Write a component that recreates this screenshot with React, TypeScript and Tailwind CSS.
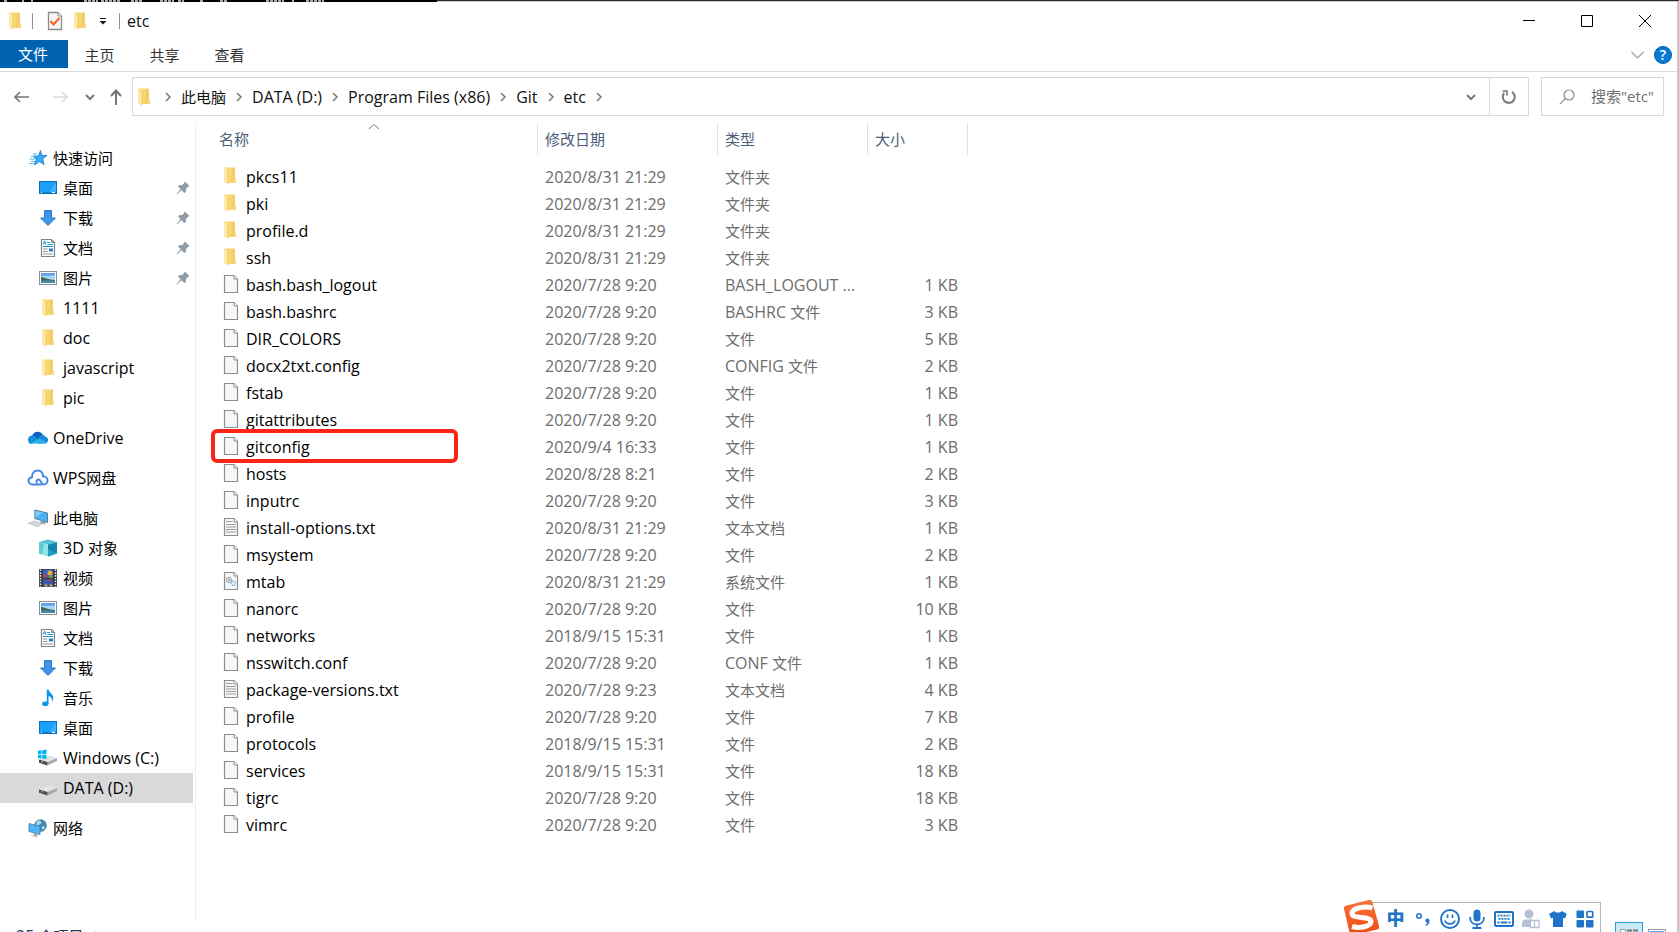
import type { ReactNode } from 'react';

/* Han runs are set one pixel smaller than Latin runs so both scripts look the same size. */
function Label({ children }: { children: string }) {
  const runs = children.split(/([\u4e00-\u9fff]+)/).filter(Boolean);
  return (
    <span className="text-base whitespace-pre">
      {runs.map((r, i) => (/[\u4e00-\u9fff]/.test(r) ? <span key={i} className="text-[15px]">{r}</span> : r))}
    </span>
  );
}

/* ---------- icons ---------- */

function FolderIcon() {
  return (
    <svg width="14" height="18" viewBox="0 0 14 18" aria-hidden="true">
      <path d="M1 0.5H12V11L13 12V16H4L1 15Z" fill="#f8d775" />
      <path d="M9 1H12V11.5H10.5V15H8Z" fill="#f3cb68" />
      <path d="M1 0.5L4.8 3V17.5L1 15.5Z" fill="#ffe9a6" />
      <path d="M4.8 3V17.5" stroke="#eebf55" strokeWidth="0.6" />
    </svg>
  );
}

function FileIcon({ kind = 'blank' }: { kind?: string }) {
  return (
    <svg width="16" height="20" viewBox="0 0 16 20" aria-hidden="true">
      <path d="M1.5 1.5H11L14.5 5V18.5H1.5Z" fill="#f5f7f9" stroke="#8b8d8f" strokeWidth="1.2" />
      <path d="M11 1.5V5H14.5" fill="#fff" stroke="#8b8d8f" strokeWidth="1" />
      {kind === 'text' && (
        <path d="M3 4.5H9.5M3 7.5H13M3 10H13M3 12.5H13M3 15H13" stroke="#9a9c9e" strokeWidth="1" />
      )}
      {kind === 'system' && (
        <g fill="none">
          <circle cx="6" cy="9" r="2.6" stroke="#8a8f94" strokeWidth="1.4" strokeDasharray="1.2 0.6" />
          <circle cx="6" cy="9" r="1" stroke="#8a8f94" strokeWidth="0.8" />
          <circle cx="10.5" cy="12.3" r="2" stroke="#7fb3d9" strokeWidth="1.4" strokeDasharray="1.1 0.5" />
        </g>
      )}
    </svg>
  );
}

function StarIcon() {
  return (
    <svg width="20" height="18" viewBox="0 0 20 18" aria-hidden="true">
      <path d="M12.5 1.5L13.8 6.5H19L14.8 9.8L16 15.8L11.5 12.6L6.2 16L8.2 10.4L5 7H10.4Z" fill="#33aef5" stroke="#1878c0" strokeWidth="0.8" />
      <path d="M5 5H9M3 7.5H7M1.5 10H7M3 12.5H7M1.5 14.5H5.5" stroke="#5cb8f0" strokeWidth="1" />
    </svg>
  );
}

function DesktopIcon() {
  return (
    <svg width="20" height="18" viewBox="0 0 20 18" aria-hidden="true">
      <rect x="1.5" y="2.5" width="17" height="12" fill="#1ba1f8" stroke="#0a6fbd" />
      <path d="M18 3L11 14H18Z" fill="#3fb2ff" />
      <path d="M2 13.7H18" stroke="#0a6fbd" strokeWidth="0.8" />
      <path d="M3 13.5H4M14 13.5H17" stroke="#fff" />
    </svg>
  );
}

function DownloadIcon() {
  return (
    <svg width="20" height="18" viewBox="0 0 20 18" aria-hidden="true">
      <path d="M6.5 1.5H13.5V9H17.5L10 16.5L2.5 9H6.5Z" fill="#3f96e6" stroke="#2a7ccb" />
    </svg>
  );
}

function DocumentIcon() {
  return (
    <svg width="20" height="20" viewBox="0 0 20 20" aria-hidden="true">
      <path d="M3.5 1.5H13.5L16.5 4.5V18.5H3.5Z" fill="#fff" stroke="#808488" strokeWidth="1.2" />
      <path d="M13.5 1.5V4.5H16.5" fill="none" stroke="#808488" />
      <path d="M5 6.5L6.7 3.5L8 6.5M9 4.5H12M9.5 6.5H15M5 8.5H15" stroke="#2191d8" strokeWidth="1.1" fill="none" />
      <path d="M5 11H9.5M5 13.5H9.5M5 16H15" stroke="#8b9095" />
      <rect x="11" y="10.5" width="4" height="3" fill="#2f7fc4" />
    </svg>
  );
}

function PictureIcon() {
  return (
    <svg width="20" height="18" viewBox="0 0 20 18" aria-hidden="true">
      <rect x="1.5" y="2.5" width="17" height="13" fill="#fff" stroke="#8c9094" />
      <rect x="3" y="4" width="14" height="10" fill="#a9d5f8" />
      <path d="M3 4H17V6.5L3 7Z" fill="#5fa3ea" />
      <path d="M3 8C6 8 8 10.5 17 11V12H3Z" fill="#3d6b58" />
      <path d="M3 11.5H17V14H3Z" fill="#4d86a8" />
    </svg>
  );
}

function OneDriveIcon() {
  return (
    <svg width="22" height="18" viewBox="0 0 22 18" aria-hidden="true">
      <path d="M5 7C6 2.5 13 0.8 16 6L10 11Z" fill="#0c62ba" />
      <path d="M1 11C0.8 8 3.5 6 6.5 6.7L14 12L4 15C2 14.5 1 13 1 11Z" fill="#1490df" />
      <path d="M12 8C14 5.5 17 5.5 18 7.5C22 8 22 13.5 18.5 14.5H10Z" fill="#1a8ad8" />
      <path d="M3.5 14.3L13 9.5L20 13.8C19.5 14.3 19 14.5 18 14.5H5C4.4 14.5 4 14.5 3.5 14.3Z" fill="#2bb0ee" />
    </svg>
  );
}

function WpsCloudIcon() {
  return (
    <svg width="22" height="18" viewBox="0 0 22 18" aria-hidden="true" fill="none" stroke="#4285ea" strokeWidth="1.9" strokeLinecap="round">
      <path d="M14 15.5H5.5C3 15.5 1.5 13.8 1.5 11.8C1.5 9.6 3.2 8.4 5 8.2C4.6 4 7.5 1.5 10.7 1.5C14 1.5 16 4 16 7.2C19 7.2 20.5 9.4 20.5 11.4C20.5 13.8 18.8 15.5 16.7 15.5C13.8 15.5 14.5 10.5 11.5 10.5C9.5 10.5 9 12.5 9.8 13.3" />
    </svg>
  );
}

function ComputerIcon() {
  return (
    <svg width="22" height="18" viewBox="0 0 22 18" aria-hidden="true">
      <path d="M7.8 1L20.5 4V13.5L7.8 9.5Z" fill="#4db2f3" stroke="#55748c" strokeWidth="0.9" />
      <path d="M8.3 1.7L15.5 3.4L8.3 8.8Z" fill="#7fcbfa" />
      <path d="M14 12L13 13.8L18 15.5L18.5 13.5Z" fill="#8d99a3" />
      <path d="M1 14.2L8 12L15 15L11 17.6Z" fill="#d5dbe0" stroke="#a6afb6" strokeWidth="0.6" />
    </svg>
  );
}

function CubeIcon() {
  return (
    <svg width="20" height="18" viewBox="0 0 20 18" aria-hidden="true">
      <path d="M1 3L10 0.5L19 3L10 5.5Z" fill="#4fc3d6" />
      <path d="M1 3L10 5.5V17.5L1 14.5Z" fill="#8fe3e6" />
      <path d="M19 3L10 5.5V17.5L19 14.5Z" fill="#1487ad" />
      <path d="M1 3L6 4.4L4 15.5L1 14.5Z" fill="#5ccbd6" />
      <path d="M10 10L19 14.5L10 17.5Z" fill="#1ea2c6" />
    </svg>
  );
}

function VideoIcon() {
  return (
    <svg width="20" height="20" viewBox="0 0 20 20" aria-hidden="true">
      <rect x="1" y="1" width="18" height="18" fill="#33363a" />
      <path d="M2.5 1.5V19M17.5 1.5V19" stroke="#e4e6e8" strokeWidth="1.6" strokeDasharray="1.6 1.2" />
      <rect x="5" y="1.5" width="10" height="8.5" fill="#3760c4" />
      <rect x="5" y="11" width="10" height="7.5" fill="#2f58bc" />
      <circle cx="12" cy="5" r="2.5" fill="#e3b23a" />
      <path d="M5 7L9 6L8 9.8H5Z" fill="#c8402c" />
      <path d="M12 7L15 8V9.8H10Z" fill="#7a9c39" />
      <path d="M6 18.5L8 15.5L10 18.5ZM11 18.5L13 15.5L15 18.5Z" fill="#e0a634" />
      <rect x="9" y="11.5" width="4" height="2" fill="#c03d2d" />
    </svg>
  );
}

function MusicIcon() {
  return (
    <svg width="20" height="18" viewBox="0 0 20 18" aria-hidden="true">
      <ellipse cx="7.3" cy="14.8" rx="3.2" ry="2.4" fill="#0d93ec" />
      <path d="M8.8 0.5H10.6C11 4 15.5 4.8 15.3 9C15.2 10.5 14.5 12 13.8 12.6C14.5 9.5 13 7.6 10.5 7V15H8.8Z" fill="#0d93ec" />
    </svg>
  );
}

function DriveIcon({ windows = false }: { windows?: boolean }) {
  return (
    <svg width="22" height="18" viewBox="0 0 22 18" aria-hidden="true">
      <path d="M2 10.5L12 6.5L20 9L10.5 13Z" fill="#e3e4e5" />
      <path d="M20 9V12L10.5 16.5V13Z" fill="#a7a9ab" />
      <path d="M2 10.5L10.5 13V16.5L2 13.8Z" fill="#4a4d50" />
      <rect x="4" y="12.2" width="2" height="1.2" fill="#5cc46a" />
      {windows && (
        <path d="M1 1.8L4.5 1.3V5H1ZM5.2 1.2L9.5 0.5V5H5.2ZM1 5.8H4.5V9.4L1 8.9ZM5.2 5.8H9.5V10L5.2 9.5Z" fill="#00b3f0" />
      )}
    </svg>
  );
}

function NetworkIcon() {
  return (
    <svg width="22" height="20" viewBox="0 0 22 20" aria-hidden="true">
      <circle cx="13.5" cy="7.5" r="6.3" fill="#4c88ad" />
      <path d="M10 3C13 1.5 15 3.5 14 5.5C12 6.5 11 8.5 9 7.5ZM15 8.5C18 7.5 19 9.5 17 11.5C15 11.5 14 10.5 15 8.5Z" fill="#a8d6ea" />
      <path d="M2 5.5L13 8.5V16.5L2 13.5Z" fill="#50b5f5" stroke="#3c7ba8" strokeWidth="0.8" />
      <path d="M7 15L6.5 17.5L10 18.5L10.5 16Z" fill="#9aa9b5" />
      <path d="M4 17.2L11 19.2" stroke="#c2cad0" strokeWidth="1" />
    </svg>
  );
}

function PinIcon() {
  return (
    <svg width="14" height="14" viewBox="0 0 14 14" aria-hidden="true">
      <path d="M8.8 0.5L13.5 5L11.8 6L10.2 7.8L9.8 11L8.3 12L5.5 9.2L1 13.5L0.5 13L4.6 8.3L2 5.6L3 4.3L6.3 4L8 2.2Z" fill="#8f9ba6" />
    </svg>
  );
}

function Chevron({ dir, className = '' }: { dir: 'right' | 'down' | 'up'; className?: string }) {
  const d = { right: 'M4 2L8 6L4 10', down: 'M2 4L6 8L10 4', up: 'M1 8L6 3.5L11 8' }[dir];
  return (
    <svg width="12" height="12" viewBox="0 0 12 12" fill="none" stroke="currentColor" className={className} aria-hidden="true">
      <path d={d} />
    </svg>
  );
}

/* ---------- data ---------- */

type NavItem = { label: string; icon: ReactNode; level: 0 | 1; pinned?: boolean; selected?: boolean };

const groups: NavItem[][] = [
  [
    { label: '快速访问', icon: <StarIcon />, level: 0 },
    { label: '桌面', icon: <DesktopIcon />, level: 1, pinned: true },
    { label: '下载', icon: <DownloadIcon />, level: 1, pinned: true },
    { label: '文档', icon: <DocumentIcon />, level: 1, pinned: true },
    { label: '图片', icon: <PictureIcon />, level: 1, pinned: true },
    { label: '1111', icon: <FolderIcon />, level: 1 },
    { label: 'doc', icon: <FolderIcon />, level: 1 },
    { label: 'javascript', icon: <FolderIcon />, level: 1 },
    { label: 'pic', icon: <FolderIcon />, level: 1 },
  ],
  [{ label: 'OneDrive', icon: <OneDriveIcon />, level: 0 }],
  [{ label: 'WPS网盘', icon: <WpsCloudIcon />, level: 0 }],
  [
    { label: '此电脑', icon: <ComputerIcon />, level: 0 },
    { label: '3D 对象', icon: <CubeIcon />, level: 1 },
    { label: '视频', icon: <VideoIcon />, level: 1 },
    { label: '图片', icon: <PictureIcon />, level: 1 },
    { label: '文档', icon: <DocumentIcon />, level: 1 },
    { label: '下载', icon: <DownloadIcon />, level: 1 },
    { label: '音乐', icon: <MusicIcon />, level: 1 },
    { label: '桌面', icon: <DesktopIcon />, level: 1 },
    { label: 'Windows (C:)', icon: <DriveIcon windows />, level: 1 },
    { label: 'DATA (D:)', icon: <DriveIcon />, level: 1, selected: true },
  ],
  [{ label: '网络', icon: <NetworkIcon />, level: 0 }],
];

type Row = [name: string, date: string, type: string, size: string, kind?: string];

const rows: Row[] = [
  ['pkcs11', '2020/8/31 21:29', '文件夹', '', 'folder'],
  ['pki', '2020/8/31 21:29', '文件夹', '', 'folder'],
  ['profile.d', '2020/8/31 21:29', '文件夹', '', 'folder'],
  ['ssh', '2020/8/31 21:29', '文件夹', '', 'folder'],
  ['bash.bash_logout', '2020/7/28 9:20', 'BASH_LOGOUT ...', '1 KB'],
  ['bash.bashrc', '2020/7/28 9:20', 'BASHRC 文件', '3 KB'],
  ['DIR_COLORS', '2020/7/28 9:20', '文件', '5 KB'],
  ['docx2txt.config', '2020/7/28 9:20', 'CONFIG 文件', '2 KB'],
  ['fstab', '2020/7/28 9:20', '文件', '1 KB'],
  ['gitattributes', '2020/7/28 9:20', '文件', '1 KB'],
  ['gitconfig', '2020/9/4 16:33', '文件', '1 KB'],
  ['hosts', '2020/8/28 8:21', '文件', '2 KB'],
  ['inputrc', '2020/7/28 9:20', '文件', '3 KB'],
  ['install-options.txt', '2020/8/31 21:29', '文本文档', '1 KB', 'text'],
  ['msystem', '2020/7/28 9:20', '文件', '2 KB'],
  ['mtab', '2020/8/31 21:29', '系统文件', '1 KB', 'system'],
  ['nanorc', '2020/7/28 9:20', '文件', '10 KB'],
  ['networks', '2018/9/15 15:31', '文件', '1 KB'],
  ['nsswitch.conf', '2020/7/28 9:20', 'CONF 文件', '1 KB'],
  ['package-versions.txt', '2020/7/28 9:23', '文本文档', '4 KB', 'text'],
  ['profile', '2020/7/28 9:20', '文件', '7 KB'],
  ['protocols', '2018/9/15 15:31', '文件', '2 KB'],
  ['services', '2018/9/15 15:31', '文件', '18 KB'],
  ['tigrc', '2020/7/28 9:20', '文件', '18 KB'],
  ['vimrc', '2020/7/28 9:20', '文件', '3 KB'],
];

/* ---------- sections ---------- */

function TitleBar() {
  return (
    <header className="flex h-[38px] shrink-0 items-center">
      <div className="flex flex-1 items-center pl-2">
        <FolderIcon />
        <span className="ml-2.5 h-4 w-px bg-[#8f8f8f]" />
        <button aria-label="属性" className="ml-3.5">
          <svg width="16" height="20" viewBox="0 0 16 20" aria-hidden="true">
            <path d="M1.5 1.5H11L14.5 5V18.5H1.5Z" fill="#f6f6f6" stroke="#8a8a8a" strokeWidth="1.3" />
            <path d="M11 1.5V5H14.5" fill="#fff" stroke="#8a8a8a" />
            <path d="M3.5 10L6.5 13.5L12.5 7" fill="none" stroke="#f0641e" strokeWidth="2" />
          </svg>
        </button>
        <button aria-label="新建文件夹" className="ml-2.5">
          <FolderIcon />
        </button>
        <button aria-label="自定义快速访问工具栏" className="ml-3">
          <svg width="8" height="8" viewBox="0 0 8 8" aria-hidden="true">
            <path d="M1 1.5H7" stroke="#111" />
            <path d="M0.5 4H7.5L4 7.5Z" fill="#111" />
          </svg>
        </button>
        <span className="ml-3 h-4 w-px bg-[#8f8f8f]" />
        <h1 className="ml-[7px] text-base text-[#111]">etc</h1>
      </div>
      <div className="flex h-full pr-[3px] text-black">
        <button aria-label="最小化" className="flex w-[58px] items-center justify-center">
          <svg width="12" height="12" viewBox="0 0 12 12" stroke="currentColor"><path d="M0 5.5H12" /></svg>
        </button>
        <button aria-label="最大化" className="flex w-[58px] items-center justify-center">
          <svg width="12" height="12" viewBox="0 0 12 12" fill="none" stroke="currentColor"><path d="M0.5 0.5H11.5V11.5H0.5Z" /></svg>
        </button>
        <button aria-label="关闭" className="flex w-[58px] items-center justify-center">
          <svg width="12" height="12" viewBox="0 0 12 12" stroke="currentColor"><path d="M0 0L12 12M12 0L0 12" /></svg>
        </button>
      </div>
    </header>
  );
}

function RibbonTabs() {
  return (
    <div className="flex h-8 shrink-0 items-start border-b border-[#dadbdc] text-[15px] text-[#333]">
      <button className="h-7 w-[68px] bg-[#0063b1] pr-0.5 text-white">文件</button>
      {['主页', '共享', '查看'].map((t) => (
        <button key={t} className="h-[30px] w-[65px] pr-0.5">{t}</button>
      ))}
      <div className="ml-auto flex h-[30px] items-center gap-2.5 pr-[5px]">
        <button aria-label="展开功能区" className="text-[#a0a0a0]">
          <svg width="13" height="8" viewBox="0 0 13 8" fill="none" stroke="currentColor" strokeWidth="1.2"><path d="M0.5 1L6.5 7L12.5 1" /></svg>
        </button>
        <button aria-label="帮助" className="flex size-[18px] items-center justify-center rounded-full border border-[#0a5ca8] bg-[#0a78d7] text-sm font-semibold text-white">
          ?
        </button>
      </div>
    </div>
  );
}

function AddressBar() {
  return (
    <div className="flex h-[51px] shrink-0 items-center pt-[5px] pr-[13px] pb-[7px] text-[#787878]">
      <button aria-label="后退" className="ml-3.5">
        <svg width="16" height="12" viewBox="0 0 16 12" fill="none" stroke="#777" strokeWidth="1.7"><path d="M15 6H1M6 1L1 6L6 11" /></svg>
      </button>
      <button aria-label="前进" className="ml-[22px]" disabled>
        <svg width="16" height="12" viewBox="0 0 16 12" fill="none" stroke="#dcdcdc" strokeWidth="1.7"><path d="M1 6H15M10 1L15 6L10 11" /></svg>
      </button>
      <button aria-label="最近浏览的位置" className="ml-4"><Chevron dir="down" className="stroke-2" /></button>
      <button aria-label="上移" className="ml-3.5">
        <svg width="12" height="16" viewBox="0 0 12 16" fill="none" stroke="#707070" strokeWidth="1.9"><path d="M6 16V1.5M1 7L6 1.5L11 7" /></svg>
      </button>
      <div className="ml-2.5 flex h-[39px] flex-1 border border-[#d9d9d9]">
        <nav aria-label="路径" className="flex flex-1 items-center pl-1 text-[#111]">
          <span className="mr-1"><FolderIcon /></span>
          {['此电脑', 'DATA (D:)', 'Program Files (x86)', 'Git', 'etc'].map((p) => (
            <span key={p} className="flex items-center">
              <Chevron dir="right" className="mx-[7px] stroke-[1.5] text-[#777]" />
              <a href="#"><Label>{p}</Label></a>
            </span>
          ))}
          <Chevron dir="right" className="mx-[7px] stroke-[1.5] text-[#777]" />
        </nav>
        <button aria-label="以前的位置" className="flex w-9 items-center justify-center"><Chevron dir="down" className="stroke-2" /></button>
        <button aria-label="刷新" className="flex w-[39px] items-center justify-center border-l border-[#d9d9d9]">
          <svg width="16" height="16" viewBox="0 0 16 16" fill="none" stroke="#777" strokeWidth="2">
            <path d="M3.2 4A6 6 0 1 0 11 2.8" />
            <path d="M1.5 2H6V6.5" strokeWidth="1.6" />
          </svg>
        </button>
      </div>
      <label className="ml-3 flex h-[39px] w-[123px] items-center border border-[#d9d9d9] pl-[17px]">
        <svg width="16" height="16" viewBox="0 0 16 16" fill="none" stroke="#888" strokeWidth="1.2" className="shrink-0">
          <circle cx="10" cy="6" r="5" /><path d="M6.3 9.7L0.8 15.2" />
        </svg>
        <input type="text" aria-label="搜索" placeholder={'搜索"etc"'} className="ml-4 w-full min-w-0 bg-transparent text-[15px] outline-none placeholder:text-[#707070]" />
      </label>
    </div>
  );
}

function Sidebar() {
  return (
    <aside className="flex w-[196px] shrink-0 flex-col gap-2.5 border-r border-[#f0f0f0] pt-5 pr-0.5 text-black">
      {groups.map((g, i) => (
        <ul key={i}>
          {g.map((n) => (
            <li key={n.label}>
              <a
                href="#"
                className={
                  'flex h-[30px] items-center pr-[3px] ' +
                  (n.level === 0 ? 'pl-[27px] ' : 'pl-[37px] ') +
                  (n.selected ? 'bg-[#d9d9d9]' : '')
                }
              >
                <span className="flex w-[22px] shrink-0 items-center justify-center">{n.icon}</span>
                <span className="ml-1 flex-1"><Label>{n.label}</Label></span>
                {n.pinned && <PinIcon />}
              </a>
            </li>
          ))}
        </ul>
      ))}
    </aside>
  );
}

function FileTable() {
  return (
    <main className="min-w-0 flex-1">
      <table className="w-[772px] table-fixed border-collapse text-left text-[#6d6d6d]">
        <colgroup>
          <col className="w-[342px]" />
          <col className="w-[180px]" />
          <col className="w-[150px]" />
          <col className="w-[100px]" />
        </colgroup>
        <thead>
          <tr className="text-[15px] text-[#4c607a]">
            {['名称', '修改日期', '类型', '大小'].map((h, i) => (
              <th key={h} className="relative p-0 pb-2 font-normal">
                <div className={'flex h-8 items-center border-r border-[#e3e3e3] ' + (i === 0 ? 'pl-[23px]' : 'pl-[7px]')}>{h}</div>
                {i === 0 && <Chevron dir="up" className="absolute top-[-2px] right-[158px] text-[#777]" />}
              </th>
            ))}
          </tr>
        </thead>
        <tbody>
          {rows.map(([name, date, type, size, kind]) => (
            <tr key={name} className="h-[27px]">
              <td className="relative p-0 pl-[27px]">
                <div className="flex h-[27px] items-center gap-[7px] text-black">
                  <span className="flex w-4 pb-0.5">{kind === 'folder' ? <FolderIcon /> : <FileIcon kind={kind} />}</span>
                  <Label>{name}</Label>
                </div>
                {name === 'gitconfig' && (
                  <span className="pointer-events-none absolute -top-1 left-[15px] h-[34px] w-[247px] rounded-md border-4 border-[#fb2516]" />
                )}
              </td>
              <td className="p-0 pl-[7px] leading-6">{date}</td>
              <td className="p-0 pl-[7px] leading-6"><Label>{type}</Label></td>
              <td className="p-0 pr-[10px] text-right leading-6">{size}</td>
            </tr>
          ))}
        </tbody>
      </table>
    </main>
  );
}

function StatusBar() {
  return (
    <footer className="flex h-[30px] shrink-0 items-start pr-2 text-[#1e395b]">
      <span className="pt-0.5 pl-4"><Label>25 个项目</Label></span>
      <span className="mt-2 ml-3 h-5 w-px bg-[#e3e3e3]" />
      <div className="ml-auto flex items-start">
        <button aria-label="详细信息" className="flex h-7 w-7 justify-center border border-[#26a0da] bg-[#cbe8f6] pt-1.5">
          <svg width="18" height="14" viewBox="0 0 18 14" fill="none"><path d="M0.5 14V0.5H5.5V14" fill="#fff" stroke="#999" /><path d="M7 1.5H12M13 1.5H18" stroke="#777" strokeWidth="2" /></svg>
        </button>
        <button aria-label="大图标" className="ml-[5px] pt-[7px] pr-[3px]">
          <svg width="18" height="14" viewBox="0 0 18 14"><rect x="0.5" y="0.5" width="17" height="13" fill="#fff" stroke="#999" /><rect x="2" y="2" width="14" height="10" fill="#5a9af0" /></svg>
        </button>
      </div>
    </footer>
  );
}

function ImeBar() {
  const cell = 'flex w-[27px] items-center justify-center';
  return (
    <div className="absolute right-[78px] bottom-0 flex h-[30px] w-[242px] border-t border-r border-[#b4b8c4] bg-white pt-0.5 pl-[23px] text-[#1f74c8]">
      <svg width="38" height="36" viewBox="0 0 38 36" className="absolute -top-1 -left-4" aria-hidden="true">
        <defs>
          <linearGradient id="sg" x1="0" y1="0" x2="0" y2="1"><stop offset="0" stopColor="#f8733c" /><stop offset="1" stopColor="#ef4a10" /></linearGradient>
        </defs>
        <path d="M3.5 6.5L26 1C28 0.6 29 1.2 29.4 3L36 27C36.3 29 35.8 30 34 30.6L10 36C8 36.4 7.2 35.6 6.7 34L1 10C0.6 8 1.5 7 3.5 6.5Z" fill="url(#sg)" />
        <path d="M29.5 9C22 6.5 9 9 9 14.5C9 20.5 28 16.5 28 22.5C28 28 16 29.5 9 27.5" fill="none" stroke="#fff" strokeWidth="5" />
      </svg>
      <button className={cell + ' pb-0.5 text-lg font-black'}>中</button>
      <button aria-label="标点" className={cell}>
        <svg width="16" height="16" viewBox="0 0 16 16"><circle cx="4" cy="5" r="2.2" fill="none" stroke="currentColor" strokeWidth="1.6" /><path d="M10.3 9.5A2.1 2.1 0 0 1 14.5 9.5C14.8 12 13 14.5 10.8 15L10.3 14C11.5 13.3 12.2 12.5 12.2 11.5C11 11.3 10.3 10.5 10.3 9.5Z" fill="currentColor" /></svg>
      </button>
      <button aria-label="表情" className={cell}>
        <svg width="20" height="20" viewBox="0 0 20 20" fill="none" stroke="currentColor" strokeWidth="2"><circle cx="10" cy="10" r="9" /><path d="M7.5 5.5V9M12.5 5.5V9M5 11.5C6.5 16 13.5 16 15 11.5" strokeWidth="1.7" /></svg>
      </button>
      <button aria-label="语音" className={cell}>
        <svg width="16" height="20" viewBox="0 0 16 20" fill="none" stroke="currentColor"><rect x="4.5" y="0.5" width="7" height="12" rx="3.5" fill="currentColor" stroke="none" /><path d="M1.2 8V9.5C1.2 17.3 14.8 17.3 14.8 9.5V8M8 15V18M3.5 19H12.5" strokeWidth="1.8" /></svg>
      </button>
      <button aria-label="软键盘" className={cell}>
        <svg width="20" height="16" viewBox="0 0 20 16" fill="none" stroke="currentColor"><rect x="1" y="1" width="18" height="14" rx="1" strokeWidth="2" /><path d="M3.5 4.7H16.5M4.5 7.8H16.5" strokeWidth="1.8" strokeDasharray="2 1" /><path d="M3.5 11.5H5.5M6.8 11.5H13.2M14.5 11.5H16.5" strokeWidth="2" /></svg>
      </button>
      <button aria-label="账号" className={cell + ' text-[#b6c0d4]'}>
        <svg width="20" height="20" viewBox="0 0 20 20" fill="currentColor"><circle cx="8" cy="5" r="4.5" /><path d="M1 18V14C1 11.5 3 10.5 5 10.5H11V18Z" /><path d="M9.5 11.5H13.5V18.5H9.5ZM13.5 11.5H18V18.5H13.5Z" fill="#fff" stroke="currentColor" strokeWidth="1.3" /></svg>
      </button>
      <button aria-label="皮肤" className={cell}>
        <svg width="18" height="18" viewBox="0 0 18 18" fill="currentColor"><path d="M5 1C7 3 11 3 13 1L17.8 4L16 8.5L14 7.8V17H4V7.8L2 8.5L0.2 4Z" /></svg>
      </button>
      <button aria-label="工具箱" className={cell}>
        <svg width="18" height="18" viewBox="0 0 18 18" fill="currentColor"><rect x="0.5" y="0.5" width="7.5" height="7.5" rx="1" /><rect x="0.5" y="10" width="7.5" height="7.5" rx="1" /><rect x="10" y="10" width="7.5" height="7.5" rx="1" /><rect x="11" y="1.5" width="5.7" height="5.7" rx="1" fill="none" stroke="currentColor" strokeWidth="1.7" /></svg>
      </button>
    </div>
  );
}

export default function App() {
  return (
    <div className="relative flex h-screen flex-col overflow-hidden bg-white font-['Open_Sans','Noto_Sans_CJK_SC',sans-serif]">
      <div className="flex h-0.5 shrink-0">
        <div className="w-[437px] bg-black">
          <svg width="330" height="2" viewBox="0 0 330 2" className="block" aria-hidden="true">
            <path d="M4 1H8M22 1H24M31 1H33M84 1H98M101 1H120M131 1H143M160 1H174M178 1H184M200 1H203M220 1H228M266 1H284M292 1H294M306 1H324" stroke="#a5a9b0" strokeWidth="2" strokeDasharray="3 1" />
          </svg>
        </div>
        <div className="flex-1 border-b border-[#d0cdd0] bg-[#2a2628]" />
      </div>
      <div className="flex min-h-0 flex-1 flex-col border-r-2 border-[#c8c8c8]">
        <TitleBar />
        <RibbonTabs />
        <AddressBar />
        <div className="flex min-h-0 flex-1 overflow-hidden">
          <Sidebar />
          <FileTable />
        </div>
        <div className="-mb-5 flex flex-col">
          <StatusBar />
        </div>
      </div>
      <ImeBar />
    </div>
  );
}
